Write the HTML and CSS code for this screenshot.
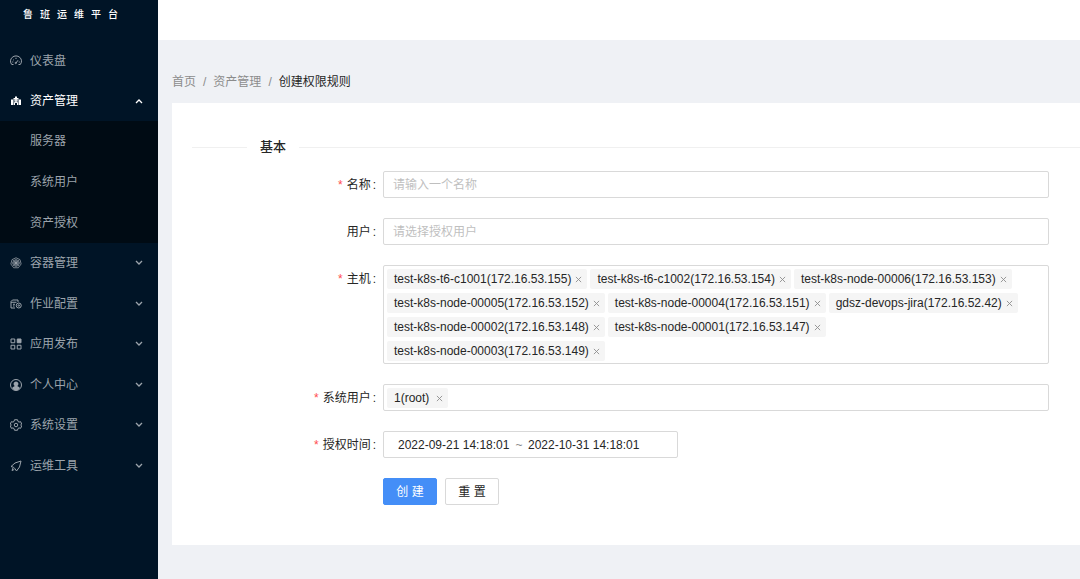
FILE: index.html
```html
<!DOCTYPE html>
<html lang="zh-CN">
<head>
<meta charset="utf-8">
<title>创建权限规则</title>
<link rel="stylesheet" href="styles.css">
</head>
<body>
<div class="app">
  <aside class="sidebar">
    <h1 class="brand">鲁班运维平台</h1>
    <nav>
      <ul class="menu">
        <li><a class="item" href="#"><svg class="icon" viewBox="0 0 24 24"><path d="M7 19H3.500A11 10.500 0 1 1 20.500 19H17M12 16L16 10.500M12 5.500V8M6 9L7.500 10.300M4.500 14H6.500M17.500 14H19.500"/><circle cx="11.500" cy="16" r="1.300"/></svg>仪表盘</a></li>
        <li><a class="item active" href="#"><svg class="icon solid" viewBox="0 0 24 24"><path d="M2 9h4v11H2zM7 6h3V3h4v3h3v14h-3v-4h-4v4H7zM18 9h4v11h-4z"/><path class="cut" d="M8.500 10h2M13.500 10h2M8.500 13.500h2M13.500 13.500h2"/></svg>资产管理<svg class="arrow" viewBox="0 0 8 8"><path d="M1 6L4 3L7 6"/></svg></a></li>
      </ul>
      <ul class="menu submenu">
        <li><a class="item child" href="#">服务器</a></li>
        <li><a class="item child" href="#">系统用户</a></li>
        <li><a class="item child" href="#">资产授权</a></li>
      </ul>
      <ul class="menu groups">
        <li><a class="item" href="#"><svg class="icon thin" viewBox="0 0 24 24"><path d="M12 1.500L20 5.300L22.300 14L16.700 21.500H7.300L1.700 14L4 5.300Z"/><circle cx="12" cy="12" r="6.500"/><circle cx="12" cy="12" r="2.500"/><path d="M12 5v14M5 12h14M7 7l10 10M17 7L7 17"/></svg>容器管理<svg class="arrow" viewBox="0 0 8 8"><path d="M1 2L4 5L7 2"/></svg></a></li>
        <li><a class="item" href="#"><svg class="icon" viewBox="0 0 24 24"><path d="M10 20H2V7L5 4H16V8M2 8.500H13M6 12.500H10M6 16H9"/><circle cx="17.500" cy="15" r="5"/><circle cx="17.500" cy="15" r="1.500"/></svg>作业配置<svg class="arrow" viewBox="0 0 8 8"><path d="M1 2L4 5L7 2"/></svg></a></li>
        <li><a class="item" href="#"><svg class="icon" viewBox="0 0 24 24"><path d="M2 2h7.500v7.500H2zM2 14.500h7.500V22H2zM14.500 14.500H22V22h-7.500z"/><path class="fill" d="M14.500 2H22v7.500h-7.500z"/></svg>应用发布<svg class="arrow" viewBox="0 0 8 8"><path d="M1 2L4 5L7 2"/></svg></a></li>
        <li><a class="item" href="#"><svg class="icon" viewBox="0 0 24 24"><circle cx="12" cy="12" r="11"/><path class="fill bare" d="M12 5a4.800 4.800 0 0 1 3 8.500v1l4 2V20a11 11 0 0 1-14 0v-3.500l4-2v-1a4.800 4.800 0 0 1 3-8.500z"/></svg>个人中心<svg class="arrow" viewBox="0 0 8 8"><path d="M1 2L4 5L7 2"/></svg></a></li>
        <li><a class="item" href="#"><svg class="icon" viewBox="0 0 24 24"><path d="M9 1.500h6l1 3.500 2 1.200 3.300-.8 2 4.600-2 2 2 2-2 4.600-3.300-.8-2 1.200-1 3.500H9l-1-3.500-2-1.200-3.300.8-2-4.600 2-2-2-2 2-4.600L6 6.200 8 5z"/><circle cx="12" cy="12" r="3.500"/></svg>系统设置<svg class="arrow" viewBox="0 0 8 8"><path d="M1 2L4 5L7 2"/></svg></a></li>
        <li><a class="item" href="#"><svg class="icon" viewBox="0 0 24 24"><path d="M22 2L10 6L2 13L7 14.500L10 17.500L13 22L19 14Z"/><path d="M6 16L4 21L8.500 19"/></svg>运维工具<svg class="arrow" viewBox="0 0 8 8"><path d="M1 2L4 5L7 2"/></svg></a></li>
      </ul>
    </nav>
  </aside>
  <div class="main">
    <header class="topbar"></header>
    <nav class="breadcrumb" aria-label="breadcrumb">
      <a href="#">首页</a><span>/</span><a href="#">资产管理</a><span>/</span><strong>创建权限规则</strong>
    </nav>
    <main class="card">
      <h2 class="divider">基本</h2>
      <form class="form">
        <label class="label required" for="name">名称</label>
        <input class="field" id="name" type="text" placeholder="请输入一个名称">
        <label class="label" for="users">用户</label>
        <input class="field" id="users" type="text" placeholder="请选择授权用户">
        <span class="label required" id="hosts">主机</span>
        <div class="field tags" role="group" aria-labelledby="hosts">
          <span class="tag">test-k8s-t6-c1001(172.16.53.155)<button type="button" class="remove" aria-label="移除"><svg viewBox="0 0 8 8"><path d="M1 1L7 7M7 1L1 7"/></svg></button></span>
          <span class="tag">test-k8s-t6-c1002(172.16.53.154)<button type="button" class="remove" aria-label="移除"><svg viewBox="0 0 8 8"><path d="M1 1L7 7M7 1L1 7"/></svg></button></span>
          <span class="tag">test-k8s-node-00006(172.16.53.153)<button type="button" class="remove" aria-label="移除"><svg viewBox="0 0 8 8"><path d="M1 1L7 7M7 1L1 7"/></svg></button></span>
          <span class="tag">test-k8s-node-00005(172.16.53.152)<button type="button" class="remove" aria-label="移除"><svg viewBox="0 0 8 8"><path d="M1 1L7 7M7 1L1 7"/></svg></button></span>
          <span class="tag">test-k8s-node-00004(172.16.53.151)<button type="button" class="remove" aria-label="移除"><svg viewBox="0 0 8 8"><path d="M1 1L7 7M7 1L1 7"/></svg></button></span>
          <span class="tag">gdsz-devops-jira(172.16.52.42)<button type="button" class="remove" aria-label="移除"><svg viewBox="0 0 8 8"><path d="M1 1L7 7M7 1L1 7"/></svg></button></span>
          <span class="tag">test-k8s-node-00002(172.16.53.148)<button type="button" class="remove" aria-label="移除"><svg viewBox="0 0 8 8"><path d="M1 1L7 7M7 1L1 7"/></svg></button></span>
          <span class="tag">test-k8s-node-00001(172.16.53.147)<button type="button" class="remove" aria-label="移除"><svg viewBox="0 0 8 8"><path d="M1 1L7 7M7 1L1 7"/></svg></button></span>
          <span class="tag">test-k8s-node-00003(172.16.53.149)<button type="button" class="remove" aria-label="移除"><svg viewBox="0 0 8 8"><path d="M1 1L7 7M7 1L1 7"/></svg></button></span>
        </div>
        <span class="label required" id="sysuser">系统用户</span>
        <div class="field tags" role="group" aria-labelledby="sysuser">
          <span class="tag wide">1(root)<button type="button" class="remove" aria-label="移除"><svg viewBox="0 0 8 8"><path d="M1 1L7 7M7 1L1 7"/></svg></button></span>
        </div>
        <label class="label required" for="start">授权时间</label>
        <div class="field range">
          <input id="start" type="text" value="2022-09-21 14:18:01"><span>~</span><input type="text" aria-label="结束时间" value="2022-10-31 14:18:01">
        </div>
        <div class="actions">
          <button class="btn primary" type="submit">创 建</button>
          <button class="btn" type="reset">重 置</button>
        </div>
      </form>
    </main>
  </div>
</div>
</body>
</html>
```
FILE: styles.css
```css
* { box-sizing: border-box; }
body {
  margin: 0;
  background: #eff1f5;
  color: #262626;
  font: 12px/20px "Liberation Sans", "Noto Sans CJK SC", sans-serif;
}
input, button { font: inherit; color: inherit; }
a { color: inherit; text-decoration: none; }
ul { margin: 0; padding: 0; list-style: none; }
svg { fill: none; stroke: currentColor; }

.app { display: flex; min-height: 100vh; }

.sidebar { flex: 0 0 158px; background: #001426; color: #9ca4ac; }
.brand {
  margin: 0 0 12px;
  padding: 0 0 0 23px;
  color: #fff;
  font-size: 10px;
  font-weight: 500;
  line-height: 29px;
  letter-spacing: 7px;
}
.menu { display: grid; grid-auto-rows: 1fr; }
.menu li { display: grid; }
.submenu { height: 122px; background: #000b14; }
.groups { height: 243px; }
.item { display: flex; align-items: center; min-height: 40px; padding: 0 15px 0 10px; }
.item.child { padding-left: 30px; }
.item.active { color: #fff; }
.icon { width: 12px; height: 12px; margin-right: 8px; stroke-width: 2; }
.icon.thin { stroke-width: 1.5; }
.icon.solid, .icon .fill { fill: currentColor; }
.icon.solid, .icon .bare { stroke: none; }
.icon .cut { stroke: #001426; }
.arrow { width: 8px; height: 8px; margin-left: auto; stroke-width: 1.3; }

.main { flex: 1; min-width: 0; }
.topbar { height: 40px; background: #fff; }
.breadcrumb { display: flex; padding: 32px 14px 11px; color: #8c8c8c; }
.breadcrumb span { padding: 0 7px; }
.breadcrumb strong { color: #262626; font-weight: 400; }

.card { margin-left: 14px; padding: 34px 0 40px 20px; background: #fff; }
.divider {
  display: flex;
  align-items: center;
  gap: 13px;
  margin: 0 0 14px;
  font-size: 13px;
  font-weight: 500;
  line-height: 20px;
}
.divider::before, .divider::after { content: ""; height: 1px; background: #f0f0f0; flex: 1; }
.divider::before { flex: 0 0 55px; }

.form {
  display: grid;
  grid-template-columns: 184px 1fr;
  gap: 20px 7px;
  padding-right: 31px;
}
.label { height: 27px; text-align: right; line-height: 28px; }
.label::after { content: ":"; margin: 0 0 0 2px; }
.required::before { content: "*"; margin-right: 4px; color: #ff4d4f; }
.field {
  width: 100%;
  min-height: 27px;
  padding: 0 9px;
  border: 1px solid #d9d9d9;
  border-radius: 2px;
  background: #fff;
}
.field::placeholder { color: #bfbfbf; }
.tags { display: flex; flex-wrap: wrap; align-content: flex-start; gap: 4px 3px; padding: 3px 20px 2px 3px; }
.tag {
  display: inline-flex;
  align-items: center;
  gap: 4px;
  padding: 0 5px 0 7px;
  border-radius: 2px;
  background: #f5f5f5;
  line-height: 20px;
}
.tag.wide { gap: 7px; }
.remove { display: flex; padding: 0; border: 0; background: none; color: #8c8c8c; }
.remove svg { width: 7px; height: 7px; }
.range { display: flex; align-items: center; width: 295px; padding: 0 14px; }
.range input { width: 112px; padding: 0; border: 0; background: none; }
.range span { width: 18px; text-align: center; color: #8c8c8c; }
.actions { display: flex; grid-column: 2; gap: 8px; }
.btn {
  width: 54px;
  height: 27px;
  padding: 0;
  border: 1px solid #d9d9d9;
  border-radius: 2px;
  background: #fff;
}
.btn.primary { border-color: #448ef7; background: #448ef7; color: #fff; }
```
